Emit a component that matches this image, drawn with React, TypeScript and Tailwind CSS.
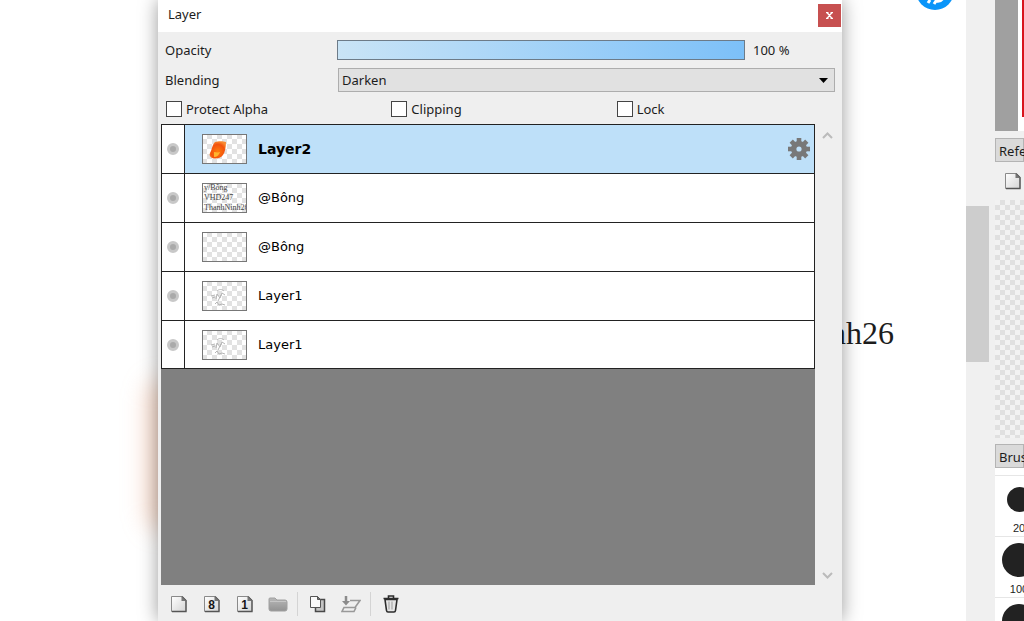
import { useState } from "react";
import type { ReactNode } from "react";

type Layer = {
  id: number;
  name: string;
  art: "fire" | "text" | "blank" | "sketch";
};

const layers: Layer[] = [
  { id: 1, name: "Layer2", art: "fire" },
  { id: 2, name: "@Bông", art: "text" },
  { id: 3, name: "@Bông", art: "blank" },
  { id: 4, name: "Layer1", art: "sketch" },
  { id: 5, name: "Layer1", art: "sketch" },
];

const Thumbnail = ({ art, id }: { art: Layer["art"]; id: number }) => (
  <svg width="45" height="30" viewBox="0 0 45 30" aria-hidden="true">
    <defs>
      <pattern id={`check${id}`} width="10" height="10" patternUnits="userSpaceOnUse">
        <rect width="10" height="10" fill="#fff" />
        <path d="M5 0h5v5H5zM0 5h5v5H0z" fill="#e2e2e2" />
      </pattern>
      <radialGradient id={`fire${id}`} cx="50%" cy="60%" r="60%">
        <stop offset="0" stopColor="#ff7d10" />
        <stop offset="0.7" stopColor="#f2520f" />
        <stop offset="1" stopColor="#f98a30" />
      </radialGradient>
      <filter id={`soft${id}`} x="-30%" y="-30%" width="160%" height="160%">
        <feGaussianBlur stdDeviation="0.6" />
      </filter>
    </defs>
    <rect width="45" height="30" fill={`url(#check${id})`} />
    {art === "fire" && (
      <g filter={`url(#soft${id})`}>
        <path d="M13 8c3-1 8-1 11 0 0 5-1 10-3 13-3 4-8 4-11 3-2-1-3-3-2-5 2-3 2-8 5-11z" fill={`url(#fire${id})`} />
        <path d="M12 18c2 0 4 1 6 0-1 3-3 5-6 5z" fill="#ffb52e" />
      </g>
    )}
    {art === "text" && (
      <g fontFamily="Liberation Serif, serif" fontSize="8" fill="#444">
        <text x="2" y="7">y/Bông</text>
        <text x="2" y="17">VHD247</text>
        <text x="2" y="27">ThanhNinh26</text>
      </g>
    )}
    {art === "sketch" && (
      <path
        d="M15 10c2-2 5-2 7 0M9 15l4-1M14 18l1-5 3 4 2-5 3 2M10 17l3-1M13 23l2-2 2 3 3-1 3 1M16 20l3-6"
        fill="none"
        stroke="#b4b4b4"
        strokeWidth="1"
      />
    )}
    <rect x="0.5" y="0.5" width="44" height="29" fill="none" stroke="#777" />
  </svg>
);

const GearIcon = () => (
  <svg width="22" height="22" viewBox="-11 -11 22 22" aria-hidden="true">
    <g fill="#787878">
      <path
        fillRule="evenodd"
        d="M0-8a8 8 0 1 0 0 16a8 8 0 1 0 0-16zM0-2.600a2.600 2.600 0 1 1 0 5.200a2.600 2.600 0 1 1 0-5.200z"
      />
      {[0, 45, 90, 135, 180, 225, 270, 315].map((angle) => (
        <path key={angle} d="M-2.300-11h4.600v5h-4.600z" transform={`rotate(${angle})`} />
      ))}
    </g>
  </svg>
);

const PageIcon = ({ label }: { label?: string }) => (
  <svg width="18" height="20" viewBox="0 0 18 20" aria-hidden="true">
    <defs>
      <linearGradient id="page" x1="0" y1="0" x2="1" y2="1">
        <stop offset="0" stopColor="#fff" />
        <stop offset="1" stopColor="#d4d4d4" />
      </linearGradient>
    </defs>
    <path d="M1.500 2.500h10.500l4 4v11h-14.500z" fill="url(#page)" stroke="#8a8a8a" />
    <path d="M12 2.500l4 4V17.500H2" fill="none" stroke="#555" strokeWidth="1.300" />
    <path d="M11.500 2.500v4.500h4.500z" fill="#777" />
    {label && (
      <text
        x="8.500"
        y="15"
        textAnchor="middle"
        fontFamily="Liberation Sans, sans-serif"
        fontSize="12"
        fontWeight="bold"
        fill="#161616"
      >
        {label}
      </text>
    )}
  </svg>
);

const FolderIcon = () => (
  <svg width="20" height="20" viewBox="0 0 20 20" aria-hidden="true">
    <defs>
      <linearGradient id="folder" x1="0" y1="0" x2="0" y2="1">
        <stop offset="0" stopColor="#b8b8b8" />
        <stop offset="1" stopColor="#929292" />
      </linearGradient>
    </defs>
    <path d="M1 5q0-1 1-1h5l2 2h8q2 0 2 2v7q0 2-2 2H3q-2 0-2-2z" fill="url(#folder)" stroke="#a0a0a0" />
    <path d="M2 7.500h16" stroke="#c6c6c6" />
  </svg>
);

const DuplicateIcon = () => (
  <svg width="18" height="20" viewBox="0 0 18 20" aria-hidden="true">
    <path d="M6.500 5.500h9v12h-9z" fill="#c4c4c4" stroke="#484848" strokeWidth="1.500" />
    <path d="M1.500 2.500h7l3 3v8h-10z" fill="#fafafa" stroke="#555" />
    <path d="M8.500 2.500v3h3z" fill="#777" stroke="#555" />
  </svg>
);

const MergeIcon = () => (
  <svg width="20" height="20" viewBox="0 0 20 20" aria-hidden="true">
    <path d="M9 6.500h10l-5 7H3l-2 4h12l2-4" fill="none" stroke="#999" strokeWidth="1.600" />
    <path d="M5 2v6" stroke="#8b8b8b" strokeWidth="2.500" />
    <path d="M1 7h8l-4 4.500z" fill="#8b8b8b" />
  </svg>
);

const TrashIcon = () => (
  <svg width="18" height="20" viewBox="0 0 18 20" fill="none" stroke="#2c2c2c" aria-hidden="true">
    <path d="M3 5.500h12l-1.500 11q-.2 1.500-1.500 1.500H6q-1.300 0-1.500-1.500z" fill="#e6e6e6" strokeWidth="1.600" />
    <path d="M1.500 4.500h15M6.500 4V2h5v2" strokeWidth="1.600" />
    <path d="M7 7.500v8M10 7.500v8" stroke="#9b9b9b" />
  </svg>
);

const ToolButton = ({ title, children }: { title: string; children: ReactNode }) => (
  <button type="button" aria-label={title} className="flex w-[33px] items-center justify-center">
    {children}
  </button>
);

const Check = ({ label }: { label: string }) => (
  <label className="flex items-center gap-1">
    <input type="checkbox" className="size-4 appearance-none border border-[#444] bg-white checked:bg-[#444]" />
    {label}
  </label>
);

const LayerList = () => {
  const [selected, setSelected] = useState(1);
  return (
    <ul className="border border-[#222] bg-white font-['DejaVu_Sans',sans-serif] text-[13px] leading-5 text-black">
      {layers.map((layer) => (
        <li key={layer.id} className="flex h-[49px] border-b border-[#222] last:h-[47px] last:border-b-0">
          <button
            type="button"
            aria-label="Toggle visibility"
            className="flex w-[23px] items-center justify-center border-r border-[#222] bg-white"
          >
            <span className="size-3 rounded-full border-3 border-[#c8c8c8] bg-[#aaa]" />
          </button>
          <button
            type="button"
            onClick={() => setSelected(layer.id)}
            className={
              selected === layer.id
                ? "flex flex-1 items-center bg-[#bee0f9] pr-1 pl-[17px] text-sm font-bold"
                : "flex flex-1 items-center pr-1 pl-[17px]"
            }
          >
            <Thumbnail art={layer.art} id={layer.id} />
            <span className="ml-[11px] flex-1 text-left">{layer.name}</span>
            {selected === layer.id && <GearIcon />}
          </button>
        </li>
      ))}
    </ul>
  );
};

const LayerWindow = () => {
  const [opacity, setOpacity] = useState(100);
  return (
    <section className="relative z-10 flex min-w-0 flex-1 flex-col bg-[#efefef] shadow-[0_0_18px_rgba(0,0,0,0.4)]">
      <header className="flex h-8 items-start justify-between bg-white pl-[10px]">
        <h1 className="pt-1 leading-5">Layer</h1>
        <button
          type="button"
          aria-label="Close"
          className="mt-1 mr-px flex size-[23px] items-center justify-center bg-[#c75050] text-white"
        >
          <svg width="7" height="7" viewBox="0 0 7 7" aria-hidden="true">
            <path d="M1 .5l5 6M6 .5l-5 6M0 .5h2.500M4.500 .5H7M0 6.500h2.500M4.500 6.500H7" stroke="currentColor" strokeWidth="1.300" />
          </svg>
        </button>
      </header>

      <div className="flex h-[35px] items-center pl-[7px]">
        <label htmlFor="opacity" className="w-[172px]">
          Opacity
        </label>
        <input
          id="opacity"
          type="range"
          min="0"
          max="100"
          value={opacity}
          onChange={(e) => setOpacity(Number(e.target.value))}
          className="h-5 min-w-0 flex-1 appearance-none border border-[#6d7b88] bg-linear-to-r from-[#c9e4f6] to-[#7cc0f8] [&::-webkit-slider-thumb]:appearance-none"
        />
        <output htmlFor="opacity" className="w-[97px] pl-2">
          {opacity} %
        </output>
      </div>

      <div className="flex h-[25px] items-center pr-[7px] pl-[7px]">
        <label htmlFor="blending" className="w-[173px]">
          Blending
        </label>
        <div className="relative flex-1">
          <select id="blending" className="h-6 w-full appearance-none border border-[#adadad] bg-[#e1e1e1] pl-[3px]">
            <option>Darken</option>
            <option>Normal</option>
            <option>Multiply</option>
          </select>
          <svg width="9" height="5" viewBox="0 0 9 5" className="pointer-events-none absolute top-[10px] right-[7px]" aria-hidden="true">
            <path d="M0 0h9L4.500 5z" />
          </svg>
        </div>
      </div>

      <div className="grid h-8 grid-cols-3 items-center pt-px pl-2">
        <Check label="Protect Alpha" />
        <Check label="Clipping" />
        <Check label="Lock" />
      </div>

      <div className="flex min-h-0 flex-1 pl-[3px]">
        <div className="min-w-0 flex-1 overflow-hidden bg-[#808080]">
          <LayerList />
        </div>
        <div className="flex w-[27px] flex-col items-center justify-between pt-2 pr-[3px] pb-1">
          <svg width="11" height="7" viewBox="0 0 11 7" fill="none" stroke="#bbb" strokeWidth="2" aria-hidden="true">
            <path d="M1 6l4.500-4.500L10 6" />
          </svg>
          <svg width="11" height="9" viewBox="0 0 11 9" fill="none" stroke="#bbb" strokeWidth="2" aria-hidden="true">
            <path d="M1 1l4.500 4.500L10 1" />
          </svg>
        </div>
      </div>

      <footer className="flex h-9 items-center pt-px pl-1">
        <ToolButton title="New layer">
          <PageIcon />
        </ToolButton>
        <ToolButton title="New 8bit layer">
          <PageIcon label="8" />
        </ToolButton>
        <ToolButton title="New 1bit layer">
          <PageIcon label="1" />
        </ToolButton>
        <ToolButton title="New folder">
          <FolderIcon />
        </ToolButton>
        <span className="mx-[3px] h-6 w-px bg-[#d4d4d4]" />
        <ToolButton title="Duplicate layer">
          <DuplicateIcon />
        </ToolButton>
        <ToolButton title="Merge down">
          <MergeIcon />
        </ToolButton>
        <span className="mx-[3px] h-6 w-px bg-[#d4d4d4]" />
        <ToolButton title="Delete layer">
          <TrashIcon />
        </ToolButton>
      </footer>
    </section>
  );
};

const brushes = [
  { size: 25, label: "20" },
  { size: 34, label: "100" },
  { size: 34, label: "" },
];

const SidePanel = () => (
  <aside className="flex w-[29px] flex-col overflow-hidden whitespace-nowrap">
    <div className="flex h-[131px] bg-white">
      <div className="w-[23px] bg-[#a0a0a0]" />
      <div className="ml-1 h-[117px] w-[2px] bg-[#d8141c]" />
    </div>
    <h2 className="mt-[7px] h-6 border border-[#b4b4b4] bg-[#dadada] pl-[3px] leading-6">Reference</h2>
    <button type="button" aria-label="New reference" className="flex h-[38px] items-center pl-[9px]">
      <PageIcon />
    </button>
    <div className="h-[238px] bg-[#f2f2f2] bg-[conic-gradient(#e0e0e0_25%,transparent_0_50%,#e0e0e0_0_75%,transparent_0)] bg-[size:10px_10px]" />
    <h2 className="mt-[6px] h-6 border border-[#b4b4b4] bg-[#dadada] pl-[3px] leading-6">Brush</h2>
    <div className="min-h-0 flex-1 overflow-hidden bg-white pt-[7px] font-['Liberation_Sans',sans-serif] text-[11px] leading-3">
      {brushes.map((brush, i) => (
        <div key={i} className="flex h-[61px] w-12 flex-col items-center border-t border-[#e6e6e6]">
          <div className="flex h-[46px] shrink-0 items-center justify-center">
            <span className="rounded-full bg-[#222]" style={{ width: brush.size, height: brush.size }} />
          </div>
          <span>{brush.label}</span>
        </div>
      ))}
    </div>
  </aside>
);

const App = () => {
  return (
    <div className="flex h-screen overflow-hidden bg-white font-['Noto_Sans',sans-serif] text-[13px] leading-5 text-[#1c1c1c]">
      <div className="relative flex min-w-0 flex-1 overflow-hidden">
        <div className="relative w-[158px] overflow-hidden">
          <div className="absolute top-[380px] -right-5 h-[150px] w-8 rounded-full bg-[#eb9468]/35 blur-md" />
        </div>
        <LayerWindow />
        <div className="relative w-[124px]">
          <svg width="38" height="38" viewBox="0 0 38 38" className="absolute -top-7 right-3" aria-hidden="true">
            <circle cx="19" cy="19" r="19" fill="#0a95f9" />
            <path d="M12 31l2-3M18 32l2-3q5 1 7-3" fill="none" stroke="#fff" strokeWidth="3" />
          </svg>
          <p className="absolute top-[315px] -left-3 font-['Liberation_Serif',serif] text-[32px] leading-9">nh26</p>
        </div>
      </div>
      <div className="w-[29px] bg-[#f0f0f0] pt-[206px]">
        <div className="h-[156px] w-[23px] bg-[#cdcdcd]" />
      </div>
      <div className="flex bg-[#f0f0f0]">
        <SidePanel />
      </div>
    </div>
  );
};

export default App;
